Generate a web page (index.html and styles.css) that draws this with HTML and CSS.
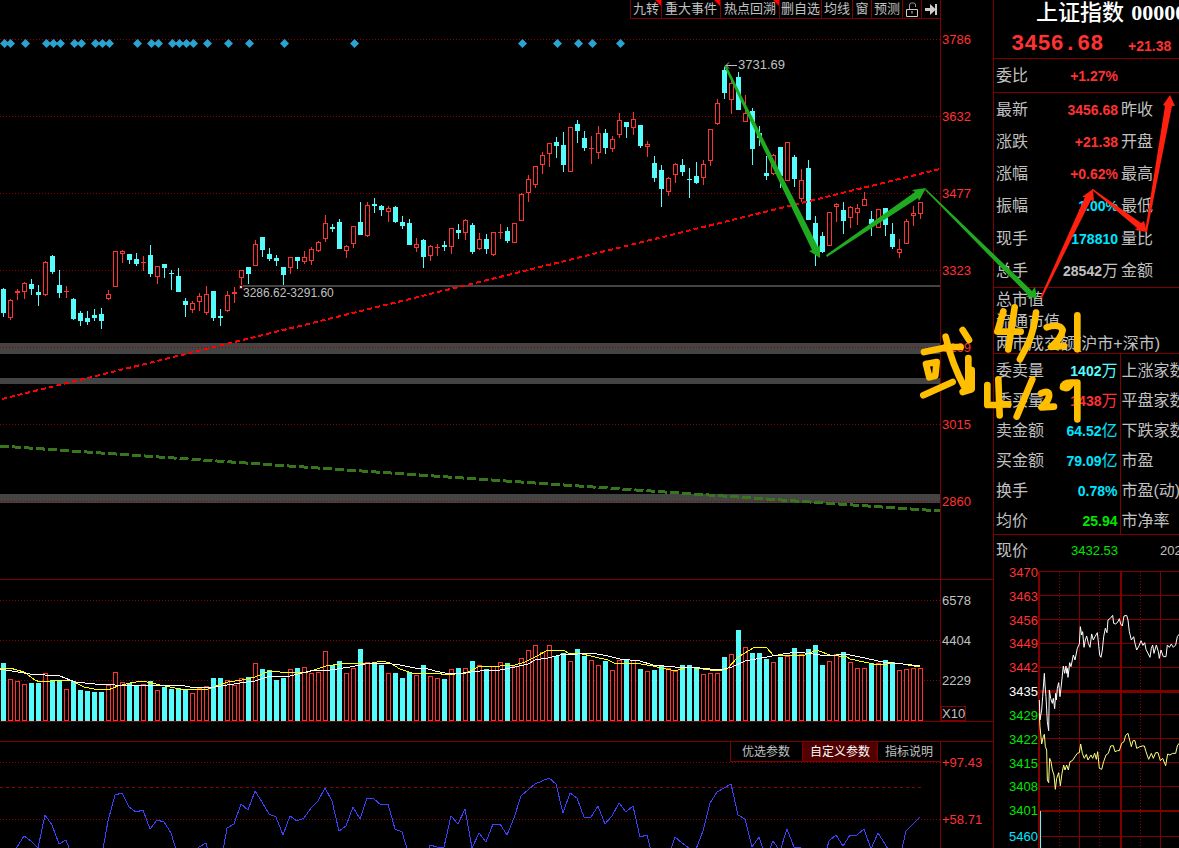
FILE: index.html
```html
<!DOCTYPE html>
<html lang="zh-CN">
<head>
<meta charset="utf-8">
<title>上证指数</title>
<link rel="stylesheet" href="styles.css">
</head>
<body>
<div class="terminal">
  <main class="charts">
    <section class="pane pane-main">
      <div class="plot">
        <nav class="toolbar">
          <button class="tool tool-new tool-s">九转</button>
          <button class="tool tool-new tool-l">重大事件</button>
          <button class="tool tool-new tool-l">热点回溯</button>
          <button class="tool tool-m">删自选</button>
          <button class="tool tool-s">均线</button>
          <button class="tool tool-xs">窗</button>
          <button class="tool tool-s">预测</button>
          <button class="tool tool-xs" aria-label="锁定"><svg class="icon" viewBox="0 0 16 16"><path d="M5.500 8V4q0-2 2-2h2q2 0 2 2v2" fill="none" stroke="#999"/><path d="M2.500 8.500h11v7h-11z" fill="none" stroke="#ccc"/><path d="M8 10v2.500" stroke="#ccc"/></svg></button>
          <button class="tool tool-xs" aria-label="收起"><svg class="icon" viewBox="0 0 16 16"><path d="M2 7h5V3l6 5.500L7 14v-4H2z" fill="#ccc"/><path d="M12 3h2v11h-2z" fill="#ccc"/></svg></button>
        </nav>
        <svg class="canvas" id="price" viewBox="0 19 940 560" preserveAspectRatio="none">
          <g class="band"><path d="M0 343h940v11H0zM0 378h940v6H0zM0 494h940v9H0zM241 285h699v2H241z"/></g>
          <path class="dots" d="M0 39.500H940M0 116.500H940M0 193.500H940M0 270.500H940M0 347.500H940M0 424.500H940M0 501.500H940"/>
          <g id="marks"></g>
          <g id="candles" shape-rendering="crispEdges"></g>
          <path class="trend-up" d="M2 399L940 169"/>
          <path class="trend-down" d="M0 446L940 511"/>
          <path d="M725 65.500h12M729 62.500l-3 3 3 3" fill="none" stroke="#c0c0c0"/>
          <text class="mark" x="738" y="69">3731.69</text>
          <text class="mark mark-small" x="243" y="297">3286.62-3291.60</text>
          <path d="M239 285h4v4h-4z" fill="#800000"/><path d="M240 286h2v2h-2z" fill="#ccc"/>
        </svg>
      </div>
      <div class="axis axis-price"><span>3786</span><span>3632</span><span>3477</span><span>3323</span><span>3169</span><span>3015</span><span>2860</span></div>
    </section>

    <section class="pane pane-volume">
      <div class="plot">
        <svg class="canvas" viewBox="0 580 940 141" preserveAspectRatio="none">
          <path class="dots" d="M0 600.500H940M0 640.500H940M0 680.500H940"/>
          <g id="volumes" shape-rendering="crispEdges"></g>
          <polyline class="line yellow" points="0,669 10,668 24,672 35,680 40,682 60,680 72,681 84,687 94,689 108,690 118,686 130,683 143,681 160,685 180,689 208,689 228,682 242,680 255,677 269,671 290,673 308,672 320,668 326,666 340,664 372,663 382,661 390,663 400,669 415,674 438,673 445,675 466,673 478,667 500,666 515,665 525,662 535,657 548,650 563,650 570,654 578,653 595,657 608,660 614,663 635,663 653,666 675,671 688,667 717,671 727,669 738,657 745,653 753,648 760,647 767,648 773,655 803,656 816,650 830,655 847,657 850,659 878,665 897,663 920,667"/>
          <polyline class="line white" points="0,669 12,671 30,674 45,675 60,676 75,682 95,684 115,685 140,686 160,685 180,685 190,687 215,687 240,683 255,681 270,676 290,676 310,671 330,670 350,667 365,664 383,663 400,665 415,668 425,668 435,671 450,674 463,673 480,671 500,670 515,667 528,664 535,660 548,658 560,655 578,654 592,653 608,656 620,659 640,661 653,665 675,667 700,668 720,670 732,667 745,661 767,657 783,654 797,652 828,656 845,654 860,657 883,662 903,664 920,666"/>
        </svg>
      </div>
      <div class="axis axis-volume"><span>6578</span><span>4404</span><span>2229</span><span class="unit">X10</span></div>
    </section>

    <section class="pane pane-indicator">
      <div class="plot">
        <svg class="canvas" viewBox="0 742 940 106" preserveAspectRatio="none">
          <path class="dots" d="M0 762.500H940M0 819.500H940"/>
          <path class="dashes" d="M0 787.500H922"/>
          <polyline class="line blue" id="oscillator"/>
        </svg>
        <div class="tabs">
          <button class="tab">优选参数</button>
          <button class="tab tab-active">自定义参数</button>
          <button class="tab">指标说明</button>
        </div>
      </div>
      <div class="axis axis-indicator"><span>+97.43</span><span>+58.71</span></div>
    </section>
  </main>

  <aside class="quote">
    <h1 class="title">上证指数 <span class="code">000001</span></h1>
    <div class="price"><strong class="last">3456.68</strong><span class="change">+21.38</span></div>
    <table class="facts facts-ratio">
      <tr><th>委比</th><td class="red">+1.27%</td><th></th></tr>
    </table>
    <table class="facts facts-day">
      <tr><th>最新</th><td class="red">3456.68</td><th>昨收</th></tr>
      <tr><th>涨跌</th><td class="red">+21.38</td><th>开盘</th></tr>
      <tr><th>涨幅</th><td class="red">+0.62%</td><th>最高</th></tr>
      <tr><th>振幅</th><td class="cyan">1.00%</td><th>最低</th></tr>
      <tr><th>现手</th><td class="cyan">178810</td><th>量比</th></tr>
      <tr><th>总手</th><td>28542<i>万</i></td><th>金额</th></tr>
    </table>
    <div class="caps"><p>总市值</p><p>流通市值</p><p>两市成交额(沪市+深市)</p></div>
    <table class="facts facts-depth">
      <tr><th>委卖量</th><td class="aqua">1402<i>万</i></td><th>上涨家数</th></tr>
      <tr><th>委买量</th><td class="red">1438<i>万</i></td><th>平盘家数</th></tr>
      <tr><th>卖金额</th><td class="cyan">64.52<i>亿</i></td><th>下跌家数</th></tr>
      <tr><th>买金额</th><td class="cyan">79.09<i>亿</i></td><th>市盈</th></tr>
      <tr><th>换手</th><td class="cyan">0.78%</td><th>市盈(动)</th></tr>
      <tr><th>均价</th><td class="green">25.94</td><th>市净率</th></tr>
    </table>
    <div class="now"><span class="now-label">现价</span><span class="now-value green">3432.53</span><span class="now-date">2021</span></div>
    <div class="intraday">
      <div class="scale">
        <div class="scale-price">
          <span class="red">3470</span><span class="red">3463</span><span class="red">3456</span><span class="red">3449</span><span class="red">3442</span><span class="base">3435</span><span class="green">3429</span><span class="green">3422</span><span class="green">3415</span><span class="green">3408</span><span class="green">3401</span>
        </div>
        <span class="scale-volume cyan">5460</span>
      </div>
      <svg class="canvas" viewBox="1038 561 141 287" preserveAspectRatio="none">
        <path class="grid" d="M1039 571.500H1179M1039 595.500H1179M1039 619.500H1179M1039 643.500H1179M1039 667.500H1179M1039 714.500H1179M1039 738.500H1179M1039 762.500H1179M1039 786.500H1179M1039 836.500H1179M1079.500 572V848M1160.500 572V848"/>
        <path class="grid thick" d="M1039 572V848M1121 572V848M1039 811H1179"/>
        <path class="grid thicker" d="M1039 691.500H1179"/>
        <path class="dots" d="M1059.500 572V848M1099.500 572V848M1140.500 572V848"/>
        <path class="aqua-line" d="M1040.500 811V848"/>
        <g transform="translate(990 540) scale(.33333)" class="ticks">
          <polyline stroke="#ffff80" points="148,520 150,560 155,612 160,590 163,583 166,620 170,630 172,720 176,728 179,655 183,665 187,690 192,705 196,748 200,715 206,698 211,737 216,700 221,675 225,690 230,675 235,690 240,665 247,662 255,650 262,640 268,638 272,612 277,640 283,655 289,643 294,660 303,645 308,655 314,640 319,658 323,635 328,685 335,688 341,665 348,645 355,640 362,618 370,617 375,635 382,632 388,632 395,610 402,605 407,586 414,580 419,600 424,620 429,602 435,602 440,625 450,620 457,618 463,618 468,635 476,658 484,640 490,655 497,638 504,638 511,662 518,655 527,677 533,642 540,645 548,640 557,640 562,618 567,610"/>
          <polyline stroke="#fff" points="148,480 150,540 155,510 158,470 163,400 165,435 168,470 172,545 176,572 178,450 182,475 187,490 190,475 194,506 197,460 199,480 202,445 206,428 210,470 214,435 220,378 224,400 228,378 230,400 232,385 234,412 239,368 243,380 250,345 255,360 262,325 268,312 271,260 275,285 278,275 282,322 286,300 290,288 295,310 300,322 305,282 310,300 315,290 322,278 326,315 329,345 333,352 337,330 341,290 346,265 351,278 354,240 361,235 368,226 371,250 376,252 382,248 388,236 392,252 397,258 402,228 410,226 414,240 418,275 424,300 431,290 435,310 440,330 447,318 453,302 459,316 464,308 468,328 480,352 484,325 488,315 492,340 499,315 505,335 508,355 513,330 520,350 528,350 532,315 538,322 544,312 550,322 557,315 562,290 567,283"/>
        </g>
      </svg>
    </div>
  </aside>

  <svg class="ink" viewBox="0 0 1179 848" preserveAspectRatio="none" role="img" aria-label="手写标注：4/21 或 4/29">
    <g fill="#1faa1f">
      <path d="M724 66L812 250 809 251 820 258 820 245 818 247 726 65z"/>
      <path d="M826 255L915 192 912 190 926 188 919 201 918 198 827 257z"/>
      <path d="M925 190L1028 295 1026 297 1037 298 1035 287 1032 291 926 189z"/>
    </g>
    <g fill="#ff2010">
      <path d="M1040 298L1085 197 1082 197 1093 189 1094 202 1091 200 1042 298z"/>
      <path d="M1092 190L1137 228 1135 230 1147 232 1144 221 1141 223 1093 189z"/>
      <path d="M1145 232L1165 106 1163 105 1170 95 1175 106 1172 106 1147 232z"/>
    </g>
    <g class="pen" transform="translate(900 280) scale(.33333)">
      <path d="M72 216L145 201H182M188 150L207 180M137 170Q155 250 195 325M205 234V325M215 270V328L188 336M78 252L88 292 106 287 110 246 78 252M70 346L158 306"/>
      <path d="M310 94L292 155H362M344 82L325 208M408 98Q402 150 385 190L360 238M440 142Q480 130 488 150Q485 175 453 201L492 198M532 106V208"/>
      <path d="M262 315V375L325 373M295 298L299 406M397 298Q375 350 350 410M423 340Q450 328 447 350Q443 366 424 382L462 380M489 322Q490 308 512 308H532M532 310V418M489 322Q502 328 510 316"/>
    </g>
  </svg>
</div>
<script src="charts.js"></script>
</body>
</html>
```

FILE: charts.js
```js
const STEP = 7;
const FIRST = 3;
const NS = "http://www.w3.org/2000/svg";

// direction, high, body top, body bottom, low
const candles = `c288,289,313,317 r299,300,318,320 r289,291,293,300 r282,283,292,299 c279,284,289,295 c285,292,295,306 r261,262,295,296 c255,256,272,274 c270,285,293,298 r286,291,292,298
c298,299,319,320 c311,313,321,326 c311,318,322,325 c309,315,318,321 c308,314,321,329 r290,294,299,300 r251,251,287,287 r250,251,254,263 c254,254,260,264 c253,259,264,266
r256,262,263,271 c245,255,274,277 r266,266,277,284 c264,264,268,278 c270,273,274,290 c268,276,292,292 c298,301,305,317 r301,303,310,313 r293,296,302,311 r286,294,313,315
c291,291,318,321 c309,316,318,326 r291,295,311,312 r287,292,294,303 r270,270,278,285 c267,267,274,284 r240,244,266,266 c237,237,250,257 c248,254,259,261 c255,258,261,266
c267,267,275,285 r257,257,268,274 c257,257,261,269 r251,257,262,264 r247,249,261,265 r241,242,251,252 r215,223,239,242 c224,227,229,232 c219,222,249,249 r245,246,251,258
r226,226,244,248 c202,222,235,235 r202,205,236,237 c198,204,206,213 c205,206,210,216 r206,208,212,222 c206,207,222,223 c216,222,226,229 c219,223,245,245 r238,244,248,252
c239,240,257,268 r245,246,256,261 r244,247,248,256 c241,245,247,251 r228,228,247,254 c224,230,233,239 r219,220,233,240 c223,225,252,254 r233,239,249,250 c234,239,249,254
r232,232,255,256 r224,232,233,239 c227,231,241,243 r223,223,243,243 r193,194,221,221 r175,179,193,202 r166,166,185,188 r152,155,165,174 r143,143,154,167 c137,142,146,158
c132,145,165,172 r127,127,172,172 c120,124,131,143 c131,138,148,151 r136,148,149,164 r126,133,153,159 c129,133,148,154 r136,139,149,152 r113,120,135,138 c122,122,127,138
r112,119,128,135 c125,125,146,148 r141,144,147,157 c156,163,178,182 c165,170,189,207 r177,178,192,196 r163,164,175,183 c159,165,172,176 c168,179,180,198 c162,176,183,184
r160,164,178,185 r129,129,161,166 r99,103,124,125 c67,70,93,99 r80,83,100,114 c72,77,110,110 r95,113,122,122 c108,111,149,165 c126,133,138,146 c156,173,176,180
r154,155,174,175 c147,147,176,188 r142,142,181,181 c155,157,179,187 r169,180,199,202 c160,168,220,220 c216,223,250,266 c232,236,252,253 r212,212,246,246 r203,204,207,222
c202,210,221,234 r206,207,218,228 r204,208,213,225 r192,199,206,206 c211,219,224,236 r209,209,228,228 c208,208,225,236 c223,234,247,249 r239,249,253,258 r219,221,244,244
r206,213,216,226 r202,202,214,219`.split(/\s+/);

const volumes = [663,679,681,684,683,683,673,680,680,689,681,690,691,692,692,685,672,682,683,685,684,681,690,687,689,688,689,693,688,686,
678,678,680,685,678,677,663,669,670,680,678,669,668,667,673,672,651,665,661,673,668,649,662,662,665,673,673,678,672,675,
665,676,678,679,669,668,668,661,665,669,666,662,663,666,658,650,645,652,645,656,653,661,649,656,660,665,661,670,660,659,
660,669,671,670,665,668,671,665,665,667,674,673,673,657,654,630,647,653,653,659,662,657,656,648,654,649,645,665,661,654,
652,662,668,668,663,663,660,662,670,669,668,668];

const oscillator = [860,853,847,836,841,848,815,825,844,840,858,864,866,864,860,821,795,793,807,812,810,829,820,822,833,856,860,857,847,843,
870,868,828,824,804,810,791,802,814,817,835,816,821,818,808,801,788,801,831,826,807,819,798,799,805,804,829,832,855,864,
864,845,847,847,816,824,809,848,833,842,824,824,835,818,796,790,784,781,778,784,813,793,798,817,817,806,824,816,803,812,
806,837,835,862,866,858,837,843,848,849,831,803,792,788,784,815,819,847,837,858,841,851,829,847,848,862,866,866,841,835,
846,835,835,829,849,833,844,856,862,831,824,817];

const events = [4,10,25,46,53,60,74,81,95,102,109,137,151,158,172,179,186,193,207,228,249,284,354,522,557,578,592,620];

function add(parent, name, attrs) {
  const el = document.createElementNS(NS, name);
  for (const key in attrs) el.setAttribute(key, attrs[key]);
  parent.appendChild(el);
}

function box(parent, rising, x, top, bottom) {
  if (rising && bottom - top > 2) {
    add(parent, "rect", { class: "rise", x: x - 1.5, y: top + 0.5, width: 4, height: bottom - top - 1 });
  } else {
    add(parent, "rect", { class: rising ? "rise-solid" : "fall", x: x - 2, y: top, width: 5, height: Math.max(1, bottom - top) });
  }
}

const candleLayer = document.getElementById("candles");
const volumeLayer = document.getElementById("volumes");
candles.forEach((item, i) => {
  const rising = item[0] === "r";
  const [high, top, bottom, low] = item.slice(1).split(",").map(Number);
  const x = FIRST + STEP * i;
  const wick = rising ? "rise-solid" : "fall";
  if (top > high) add(candleLayer, "rect", { class: wick, x, y: high, width: 1, height: top - high });
  if (low > bottom) add(candleLayer, "rect", { class: wick, x, y: bottom, width: 1, height: low - bottom });
  box(candleLayer, rising, x, top, bottom);
  box(volumeLayer, rising, x, volumes[i], 721);
});

document.getElementById("oscillator").setAttribute("points",
  oscillator.map((y, i) => `${FIRST + STEP * i},${y}`).join(" "));

const marks = document.getElementById("marks");
events.forEach(x => add(marks, "path", { d: `M${x - 4} 43.5l4.500-4.500 4.500 4.500-4.500 4.500z`, fill: "#2ba3d0" }));
```

FILE: styles.css
```css
* { box-sizing: border-box; }

body {
  margin: 0;
  background: #000;
  color: #c0c0c0;
  font-family: "Liberation Sans", "Noto Sans CJK SC", sans-serif;
  font-size: 13px;
  overflow: hidden;
}

button {
  margin: 0;
  padding: 0;
  border: 0;
  background: none;
  color: inherit;
  font: inherit;
  white-space: nowrap;
}

.terminal { position: relative; display: flex; overflow: hidden; }
.charts { flex: 1; min-width: 0; }
.pane { display: flex; border-bottom: 1px solid #800000; }
.pane-main { height: 580px; }
.pane-volume { height: 142px; }
.pane-indicator {
  height: 107px;
  margin-top: 19px;
  border-top: 1px solid #800000;
  border-bottom: 0;
  overflow: hidden;
}
.plot { position: relative; display: flex; flex-direction: column; flex: 1; min-width: 0; }
.canvas { display: block; flex: 1; width: 100%; min-width: 0; min-height: 0; }

.toolbar { display: flex; justify-content: flex-end; height: 19px; }
.tool {
  position: relative;
  height: 19px;
  border-left: 1px solid #800000;
  border-bottom: 1px solid #800000;
  line-height: 18px;
}
.tool-xs { width: 19px; }
.tool-s { width: 31px; }
.tool-m { width: 42px; }
.tool-l { width: 59px; }
.tool-new::after {
  content: "";
  position: absolute;
  top: 0;
  right: 0;
  width: 6px;
  height: 6px;
  background: #f00;
  clip-path: polygon(0 0, 100% 0, 100% 100%);
}
.icon { display: block; width: 16px; height: 16px; margin: 0 auto; }

.axis { display: flex; flex-direction: column; flex: 0 0 53px; border-left: 1px solid #800000; padding-left: 1px; }
.axis span { flex: none; }
.axis-price { color: #ff3232; }
.axis-price span { height: 77px; padding-top: 1px; line-height: 77px; }
.axis-volume span { line-height: 42px; height: 40px; }
.axis-volume .unit {
  align-self: flex-start;
  height: 15px;
  margin: 6px 0 0 -1px;
  border: 1px solid #800000;
  line-height: 14px;
}
.axis-indicator { color: #ff3232; }
.axis-indicator span { line-height: 42px; }
.axis-indicator span + span { line-height: 72px; }

.tabs {
  position: absolute;
  top: 0;
  right: 0;
  display: flex;
  height: 20px;
  border-bottom: 1px solid #800000;
  background: #000;
  font-size: 12px;
}
.tab { padding: 2px 12px 0 11px; border-left: 1px solid #800000; line-height: 17px; }
.tab + .tab { padding: 2px 7px 0; }
.tab-active { padding: 2px 6px 0; background: #500000; color: #fff; }

.dots { fill: none; stroke: #900000; stroke-dasharray: 1 2; shape-rendering: crispEdges; }
.dashes { fill: none; stroke: #900000; stroke-dasharray: 3 3; shape-rendering: crispEdges; }
.band { fill: #444; }
.rise { fill: #000; stroke: #ff3232; }
.rise-solid { fill: #ff3232; }
.fall { fill: #54fcfc; }
.line { fill: none; stroke-width: 1; shape-rendering: crispEdges; }
.yellow { stroke: #ff0; }
.white { stroke: #fff; }
.blue { stroke: #4040ff; }
.trend-up { stroke: #f00; stroke-width: 2; stroke-dasharray: 5 3; shape-rendering: crispEdges; }
.trend-down { stroke: #38761d; stroke-width: 3; stroke-dasharray: 9 3; shape-rendering: crispEdges; }
.mark { fill: #c0c0c0; font-size: 13px; }
.mark-small { font-size: 12px; }

.quote { flex: 0 0 186px; height: 848px; display: flex; flex-direction: column; border-left: 1px solid #800000; overflow: hidden; }
.title {
  margin: 0;
  padding-left: 42px;
  height: 26px;
  color: #fff;
  font-size: 22px;
  font-weight: 500;
  line-height: 25px;
  white-space: nowrap;
}
.code { margin-left: 1px; font-family: "Liberation Serif", serif; font-weight: 700; }
.price { display: flex; align-items: center; height: 33px; padding-left: 17px; border-bottom: 1px solid #800000; color: #ff3232; white-space: nowrap; }
.last { flex: 0 0 117px; padding-top: 4px; font-family: "Liberation Mono", monospace; font-size: 22px; }
.change { padding-top: 8px; font-size: 14px; font-weight: 700; line-height: 20px; }

.facts { width: 100%; table-layout: fixed; border-collapse: collapse; line-height: 20px; white-space: nowrap; }
.facts tr > * { padding: 1px 0 0; }
.facts tr > :first-child { padding-left: 2px; }
.facts th { width: 50px; font-size: 16px; font-weight: 400; text-align: left; }
.facts td { width: 74px; font-size: 14px; font-weight: 700; text-align: right; }
.facts th:last-child { width: auto; padding-left: 3px; }
.facts i { font-size: 16px; font-style: normal; font-weight: 400; }
.facts-ratio { height: 34px; border-bottom: 1px solid #800000; }
.facts-day { height: 195px; border-bottom: 1px solid #800000; }
.facts-depth { height: 181px; border-bottom: 1px solid #800000; }
.facts-depth tr > * { padding-top: 4px; }
.facts-depth th:last-child { border-left: 1px solid #800000; padding-left: 1px; }
.facts-depth td { width: 76px; padding-right: 2px; }

.caps { height: 66px; padding-top: 1px; border-bottom: 1px solid #800000; font-size: 16px; white-space: nowrap; }
.caps p { margin: 0; padding-left: 2px; line-height: 22px; }

.now { display: flex; height: 26px; padding-left: 2px; line-height: 32px; white-space: nowrap; }
.now-label { flex: 0 0 50px; font-size: 16px; }
.now-value { flex: 0 0 72px; text-align: right; }
.now-date { padding-left: 42px; }

.intraday { display: flex; flex: 1; min-height: 0; }
.scale { flex: 0 0 44px; text-align: right; }
.scale-price { display: grid; grid-template-rows: repeat(11, 1fr); height: 262px; line-height: 23px; }
.scale-volume { display: block; line-height: 28px; }
.grid { fill: none; stroke: #800000; shape-rendering: crispEdges; }
.thick { stroke-width: 2; }
.thicker { stroke-width: 3; }
.aqua-line { stroke: #54fcfc; shape-rendering: crispEdges; }
.ticks { fill: none; stroke-width: 3; }

.red { color: #ff3232; }
.cyan { color: #00e5ff; }
.aqua { color: #54fcfc; }
.green { color: #00e600; }
.base { color: #fff; }

.ink { position: absolute; inset: 0; width: 100%; height: 100%; pointer-events: none; }
.pen { fill: none; stroke: #ffbf00; stroke-width: 20; stroke-linecap: round; stroke-linejoin: round; }
```
